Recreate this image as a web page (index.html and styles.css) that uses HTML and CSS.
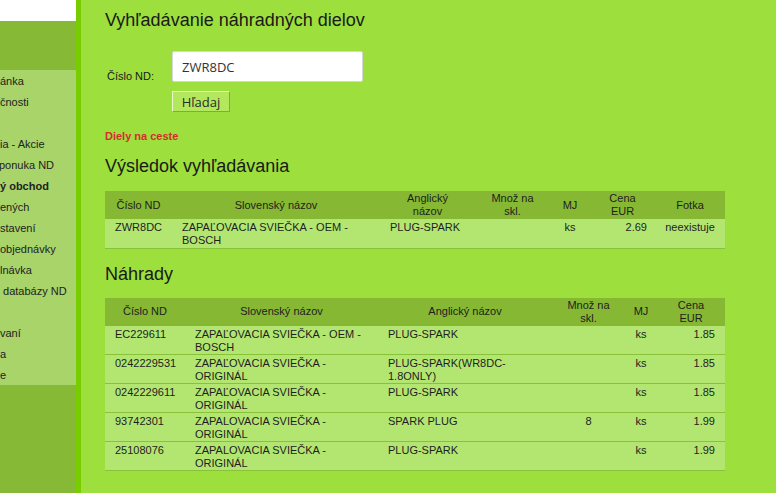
FILE: index.html
```html
<!DOCTYPE html>
<html lang="sk">
<head>
<meta charset="utf-8">
<title>Vyhľadávanie náhradných dielov</title>
<link rel="stylesheet" href="styles.css">
</head>
<body>
<div class="page">
  <aside class="sidebar">
    <div class="side-top"></div>
    <div class="side-head"></div>
    <ul class="nav">
      <li>ánka</li>
      <li>čnosti</li>
      <li>&nbsp;</li>
      <li>ia - Akcie</li>
      <li class="cut">ponuka ND</li>
      <li class="active">ý obchod</li>
      <li>ených</li>
      <li>stavení</li>
      <li>objednávky</li>
      <li>lnávka</li>
      <li>&nbsp;databázy ND</li>
      <li>&nbsp;</li>
      <li>vaní</li>
      <li>a</li>
      <li>e</li>
    </ul>
    <div class="side-foot"></div>
  </aside>
  <div class="stripe"></div>
  <main class="content">
    <h1 class="title">Vyhľadávanie náhradných dielov</h1>
    <form class="search">
      <div class="search-row">
        <label class="search-label" for="nd">Číslo ND:</label>
        <div class="search-fields">
          <input id="nd" class="search-input" type="text" value="ZWR8DC">
          <button class="search-btn" type="button">Hľadaj</button>
        </div>
      </div>
    </form>
    <div class="onway">Diely na ceste</div>

    <h2 class="section">Výsledok vyhľadávania</h2>
    <table class="grid grid1">
      <colgroup>
        <col style="width:67px"><col style="width:208px"><col style="width:95px"><col style="width:75px"><col style="width:40px"><col style="width:65px"><col style="width:70px">
      </colgroup>
      <thead>
        <tr><th>Číslo ND</th><th>Slovenský názov</th><th>Anglický<br>názov</th><th>Množ na<br>skl.</th><th>MJ</th><th>Cena<br>EUR</th><th>Fotka</th></tr>
      </thead>
      <tbody>
        <tr><td>ZWR8DC</td><td>ZAPAĽOVACIA SVIEČKA - OEM -<br>BOSCH</td><td>PLUG-SPARK</td><td class="c"></td><td class="c">ks</td><td class="r price">2.69</td><td class="c">neexistuje</td></tr>
      </tbody>
    </table>

    <h2 class="section section-2">Náhrady</h2>
    <table class="grid grid2">
      <colgroup>
        <col style="width:80px"><col style="width:193px"><col style="width:174px"><col style="width:73px"><col style="width:32px"><col style="width:68px">
      </colgroup>
      <thead>
        <tr><th>Číslo ND</th><th>Slovenský názov</th><th>Anglický názov</th><th>Množ na<br>skl.</th><th>MJ</th><th>Cena<br>EUR</th></tr>
      </thead>
      <tbody>
        <tr><td>EC229611</td><td>ZAPAĽOVACIA SVIEČKA - OEM -<br>BOSCH</td><td>PLUG-SPARK</td><td class="c"></td><td class="c">ks</td><td class="r">1.85</td></tr>
        <tr><td>0242229531</td><td>ZAPAĽOVACIA SVIEČKA -<br>ORIGINÁL</td><td>PLUG-SPARK(WR8DC-<br>1.8ONLY)</td><td class="c"></td><td class="c">ks</td><td class="r">1.85</td></tr>
        <tr><td>0242229611</td><td>ZAPAĽOVACIA SVIEČKA -<br>ORIGINÁL</td><td>PLUG-SPARK</td><td class="c"></td><td class="c">ks</td><td class="r">1.85</td></tr>
        <tr><td>93742301</td><td>ZAPALOVACIA SVIEČKA -<br>ORIGINÁL</td><td>SPARK PLUG</td><td class="c">8</td><td class="c">ks</td><td class="r">1.99</td></tr>
        <tr><td>25108076</td><td>ZAPALOVACIA SVIEČKA -<br>ORIGINÁL</td><td>PLUG-SPARK</td><td class="c"></td><td class="c">ks</td><td class="r">1.99</td></tr>
      </tbody>
    </table>
  </main>
</div>
</body>
</html>
```
FILE: styles.css
```css
* { box-sizing: border-box; }
html, body { margin: 0; padding: 0; }
body {
  font-family: "Liberation Sans", Arial, sans-serif;
  color: #1e1e1e;
  background: #9ddf3c;
}
.page {
  display: flex;
  height: 493px;
  overflow: hidden;
}
.sidebar {
  width: 76px;
  flex: none;
  display: flex;
  flex-direction: column;
  background: #86b935;
  overflow: hidden;
}
.side-top { height: 21px; background: #ffffff; }
.side-head { height: 49px; background: #86b935; }
.nav {
  list-style: none;
  margin: 0;
  padding: 0;
  background: #a8d46a;
  font-size: 11px;
  line-height: 21px;
  white-space: nowrap;
}
.nav li { height: 21px; padding-top: 1px; color: #222; }
.nav li.active { font-weight: bold; }
.nav li.cut { margin-left: -1px; }
.side-foot { flex: 1; background: #86b935; }
.stripe { width: 5px; flex: none; background: #77cd00; }
.content {
  flex: 1;
  padding: 0 0 0 24px;
  background: #9ddf3c;
}
.title {
  margin: 0;
  padding-top: 9px;
  font-size: 18px;
  font-weight: normal;
  line-height: 22px;
  color: #1a1a1a;
}
.search { margin: 20px 0 0 2px; }
.search-row { display: flex; align-items: flex-start; }
.search-label {
  width: 65px;
  padding-top: 19px;
  font-size: 11px;
  color: #1a1a1a;
}
.search-fields {
  display: flex;
  flex-direction: column;
  align-items: flex-start;
  gap: 9px;
}
.search-input {
  width: 191px;
  height: 31px;
  margin: 0;
  padding: 0 9px;
  border: 1px solid #d6d6d6;
  border-radius: 2px;
  background: #fff;
  font-family: "Open Sans", sans-serif;
  font-size: 13px;
  color: #333;
}
.search-btn {
  width: 58px;
  height: 21px;
  margin: 0;
  padding: 0;
  border: 1px solid;
  border-color: #e8f8cc #8a9a80 #8a9a80 #e8f8cc;
  background: #b3e85d;
  font-family: "Open Sans", sans-serif;
  font-size: 13px;
  color: #2a2a2a;
}
.onway {
  margin-top: 18px;
  font-size: 11px;
  font-weight: bold;
  color: #d42d2d;
}
.section {
  margin: 13px 0 0;
  font-size: 18px;
  font-weight: normal;
  line-height: 22px;
  color: #1a1a1a;
}
.section-2 { margin-top: 14px; }
.grid {
  width: 620px;
  border-collapse: collapse;
  table-layout: fixed;
  font-size: 11px;
  line-height: 13px;
}
.grid1 { margin-top: 14px; }
.grid2 { margin-top: 13px; }
.grid th {
  height: 28px;
  padding: 0 4px;
  background: #86b833;
  font-weight: normal;
  color: #1e1e1e;
  text-align: center;
  vertical-align: middle;
}
.grid td {
  padding: 2px 10px 0;
  height: 29px;
  background: #b3e671;
  border-bottom: 1px solid #88c13a;
  vertical-align: top;
  color: #1e1e1e;
}
.grid td.c { text-align: center; }
.grid td.r { text-align: right; }
.grid td.price { padding-right: 8px; }
```
